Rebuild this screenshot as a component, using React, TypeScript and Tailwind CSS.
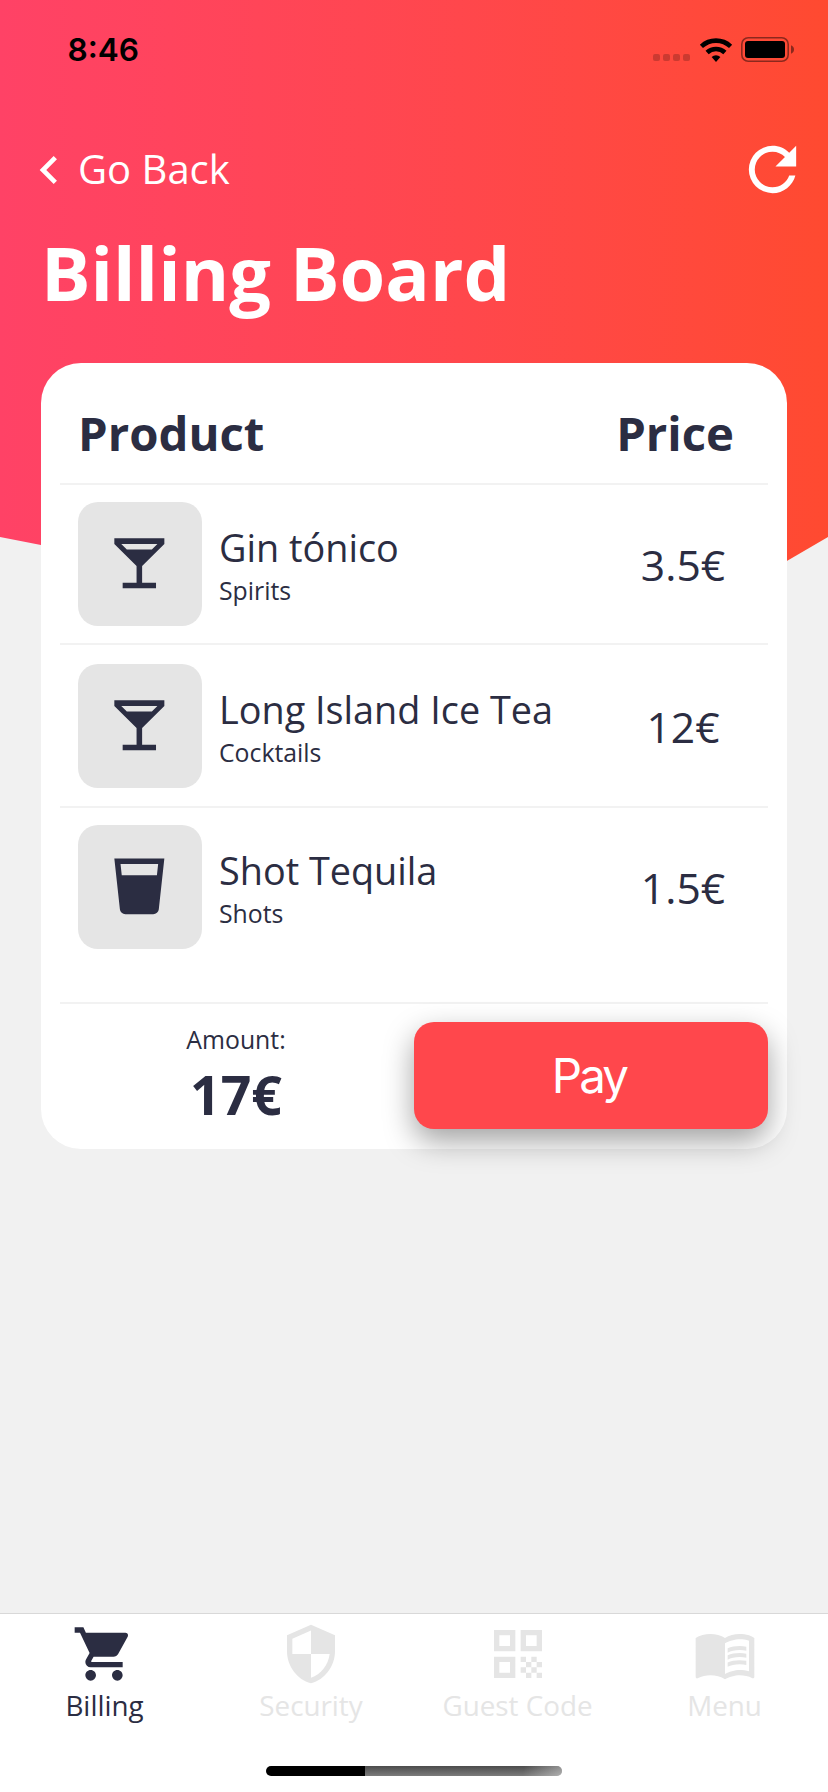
type IconProps = { d: string; className?: string };

function Icon({ d, className }: IconProps) {
  return (
    <svg viewBox="0 0 24 24" fill="currentColor" className={className} aria-hidden="true">
      <path fillRule="evenodd" d={d} />
    </svg>
  );
}

const chevronLeft =
  "M15.41,16.58L10.83,12L15.41,7.41L14,6L8,12L14,18L15.41,16.58Z";
const refresh =
  "M17.65,6.35C16.2,4.9 14.21,4 12,4A8,8 0 0,0 4,12A8,8 0 0,0 12,20C15.73,20 18.84,17.45 19.73,14H17.65C16.83,16.33 14.61,18 12,18A6,6 0 0,1 6,12A6,6 0 0,1 12,6C13.66,6 15.14,6.69 16.22,7.78L13,11H20V4L17.65,6.35Z";
const cocktail =
  "M7.5,7L5.5,5H18.5L16.5,7M11,13V19H6V21H18V19H13V13L21,5V3H3V5L11,13Z";
const cup =
  "M18.32,8H5.67L5.23,4H18.77M3,2L5,20.23C5.13,21.23 5.97,22 7,22H17C18,22 18.87,21.23 19,20.23L21,2H3Z";
const cart =
  "M17,18C15.89,18 15,18.89 15,20A2,2 0 0,0 17,22A2,2 0 0,0 19,20C19,18.89 18.1,18 17,18M1,2V4H3L6.6,11.59L5.24,14.04C5.09,14.32 5,14.65 5,15A2,2 0 0,0 7,17H19V15H7.42A0.25,0.25 0 0,1 7.17,14.75C7.17,14.7 7.18,14.66 7.2,14.63L8.1,13H15.55C16.3,13 16.96,12.58 17.3,11.97L20.88,5.5C20.95,5.34 21,5.17 21,5A1,1 0 0,0 20,4H5.21L4.27,2M7,18C5.89,18 5,18.89 5,20A2,2 0 0,0 7,22A2,2 0 0,0 9,20C9,18.89 8.1,18 7,18Z";
const shield =
  "M12,12H19C18.47,16.11 15.72,19.78 12,20.92V12H5V6.3L12,3.19M12,1L3,5V11C3,16.55 6.84,21.73 12,23C17.16,21.73 21,16.55 21,11V5L12,1Z";
const qrCode =
  "M3,11H11V3H3V11M5,5H9V9H5V5M3,21H11V13H3V21M5,15H9V19H5V15M13,3V11H21V3H13M19,9H15V5H19V9M13,13H15V15H13V13M17,13H19V15H17V13M15,15H17V17H15V15M19,15H21V17H19V15M13,17H15V19H13V17M17,17H19V19H17V17M15,19H17V21H15V19M19,19H21V21H19V19Z";
const menuBook =
  "M21 5c-1.11-.35-2.33-.5-3.5-.5-1.95 0-4.05.4-5.5 1.5-1.45-1.1-3.55-1.5-5.5-1.5S2.45 4.9 1 6v14.65c0 .25.25.5.5.5.1 0 .15-.05.25-.05C3.1 20.45 5.05 20 6.5 20c1.95 0 4.05.4 5.5 1.5 1.35-.85 3.8-1.5 5.5-1.5 1.65 0 3.35.3 4.75 1.05.1.05.15.05.25.05.25 0 .5-.25.5-.5V6c-.6-.45-1.25-.75-2-1zm0 13.5c-1.1-.35-2.3-.5-3.5-.5-1.7 0-4.15.65-5.5 1.5V8c1.35-.85 3.8-1.5 5.5-1.5 1.2 0 2.4.15 3.5.5v11.5zM17.5 10.5c.88 0 1.73.09 2.5.26V9.24c-.79-.15-1.64-.24-2.5-.24-1.7 0-3.24.29-4.5.83v1.66c1.13-.64 2.7-.99 4.5-.99zM13 12.49v1.66c1.13-.64 2.7-.99 4.5-.99.88 0 1.73.09 2.5.26V11.9c-.79-.15-1.64-.24-2.5-.24-1.7 0-3.24.3-4.5.83zM17.5 14.33c-1.7 0-3.24.29-4.5.83v1.66c1.13-.64 2.7-.99 4.5-.99.88 0 1.73.09 2.5.26v-1.52c-.79-.16-1.64-.24-2.5-.24z";

const products = [
  { name: "Gin tónico", kind: "Spirits", price: "3.5€", icon: cocktail, row: "h-[160px] border-b-2 pt-[17px]" },
  { name: "Long Island Ice Tea", kind: "Cocktails", price: "12€", icon: cocktail, row: "h-[163px] border-b-2 pt-[19px]" },
  { name: "Shot Tequila", kind: "Shots", price: "1.5€", icon: cup, row: "h-[196px] border-b-2 pt-[17px]" },
];

const tabs = [
  { label: "Billing", icon: cart, color: "text-[#2b2d42]", labelClass: "pl-[2px]" },
  { label: "Security", icon: shield, color: "text-[#e5e5e5]", labelClass: "pl-px" },
  { label: "Guest Code", icon: qrCode, color: "text-[#e5e5e5]", labelClass: "" },
  { label: "Menu", icon: menuBook, color: "text-[#e5e5e5]", labelClass: "" },
];

function StatusBar() {
  return (
    <div className="flex h-[99px] items-center pl-[67.5px] pr-[33px] text-black">
      <span className="font-['Inter',sans-serif] text-[31.6px] font-semibold leading-10">8:46</span>
      <div className="ml-auto flex gap-[3px] pt-4">
        <i className="size-[7px] rounded-xs bg-black/20" />
        <i className="size-[7px] rounded-xs bg-black/20" />
        <i className="size-[7px] rounded-xs bg-black/20" />
        <i className="size-[7px] rounded-xs bg-black/20" />
      </div>
      <svg viewBox="0 0 34 24" className="ml-[9px] h-6 w-[34px]" fill="none" stroke="black" strokeWidth="4.6">
        <path d="M2.4 8.35A21.4 21.4 0 0 1 31.6 8.35" />
        <path d="M8.1 14.5A13 13 0 0 1 25.9 14.5" />
        <path d="M17 24L12.6 19A6.7 6.7 0 0 1 21.4 19Z" fill="black" stroke="none" />
      </svg>
      <svg viewBox="0 0 54 25" className="ml-2 h-[25px] w-[54px]">
        <rect x="0.8" y="0.8" width="46.4" height="23.4" rx="6.4" fill="none" stroke="black" strokeOpacity="0.45" strokeWidth="1.6" />
        <rect x="4" y="4" width="40" height="17" rx="3" />
        <path d="M50 8.3Q53 9.5 53 12.5T50 16.7Z" fillOpacity="0.45" />
      </svg>
    </div>
  );
}

function BillCard() {
  return (
    <section className="mx-[41px] mt-14 flex h-[786px] flex-col rounded-[40px] bg-white px-[19px] text-[#2b2d42]">
      <div className="flex h-[122px] items-center justify-between border-b-2 border-[#f2f2f2] pl-[18px] pr-[34px] pt-[19px] text-[47.3px] font-bold leading-[60px]">
        <h2>Product</h2>
        <h2>Price</h2>
      </div>
      {products.map((p) => (
        <div key={p.name} className={`flex items-start border-[#f2f2f2] pl-[18px] ${p.row}`}>
          <div className="flex size-[124px] shrink-0 items-center justify-center rounded-[20px] bg-[#e5e5e5] pb-[2px] pr-[2px]">
            <Icon d={p.icon} className="size-[66.7px]" />
          </div>
          <div className="flex flex-col whitespace-nowrap pl-[17px] pt-[21px]">
            <span className="text-[37.8px] leading-[50px]">{p.name}</span>
            <span className="text-[24.8px] leading-[34px]">{p.kind}</span>
          </div>
          <span className="ml-auto w-[170px] text-center text-[42.6px] leading-[124px]">{p.price}</span>
        </div>
      ))}
      <div className="flex pt-[18px]">
        <div className="flex w-[354px] flex-col items-center pr-[2px]">
          <span className="text-[24.8px] leading-[34px]">Amount:</span>
          <span className="mt-1 text-[53.5px] font-bold leading-[70px]">17€</span>
        </div>
        <button className="h-[107px] w-[354px] rounded-[20px] bg-[#ff474c] pr-[4px] font-['Inter',sans-serif] text-[47.5px] font-normal leading-none tracking-[-2.9px] text-white shadow-[0_12px_30px_rgba(0,0,0,0.37)]">
          Pay
        </button>
      </div>
    </section>
  );
}

export default function App() {
  return (
    <div className="flex h-[1792px] w-[828px] flex-col overflow-hidden bg-[#f1f1f1] font-['Open_Sans',sans-serif]">
      <div className="grid">
        <div className="h-[658px] bg-linear-to-r from-[#ff4266] to-[#ff4a30] [clip-path:polygon(0_0,100%_0,100%_537px,75%_658px,0_537px)] [grid-area:1/1]" />
        <div className="isolate [grid-area:1/1]">
          <StatusBar />
          <header className="text-white">
            <div className="flex h-[139px] items-center pl-[21px] pr-5">
              <Icon d={chevronLeft} className="mt-[2px] size-[56px]" />
              <span className="pl-px text-[40px] leading-[56px]">Go Back</span>
              <Icon d={refresh} className="ml-auto mt-[2px] size-[71px]" />
            </div>
            <h1 className="pl-[41px] pt-px text-[73.8px] font-bold leading-[68px]">Billing Board</h1>
          </header>
          <BillCard />
        </div>
      </div>
      <nav className="mt-auto flex h-[179px] flex-col border-t border-[#d8d8d8] bg-white pt-2">
        <div className="grid grid-cols-4">
          {tabs.map((t) => (
            <div key={t.label} className={`flex flex-col items-center ${t.color}`}>
              <Icon d={t.icon} className="size-16" />
              <span className={`text-[27.8px] leading-[38px] ${t.labelClass}`}>{t.label}</span>
            </div>
          ))}
        </div>
        <div className="mx-auto mb-4 mt-auto flex h-[10px] w-[296px] overflow-hidden rounded-full">
          <div className="w-[99px] bg-black" />
          <div className="flex-1 bg-[linear-gradient(100deg,transparent_80%,rgba(255,255,255,0.4)),linear-gradient(#4c4c4c,#7b7b7b)]" />
        </div>
      </nav>
    </div>
  );
}
